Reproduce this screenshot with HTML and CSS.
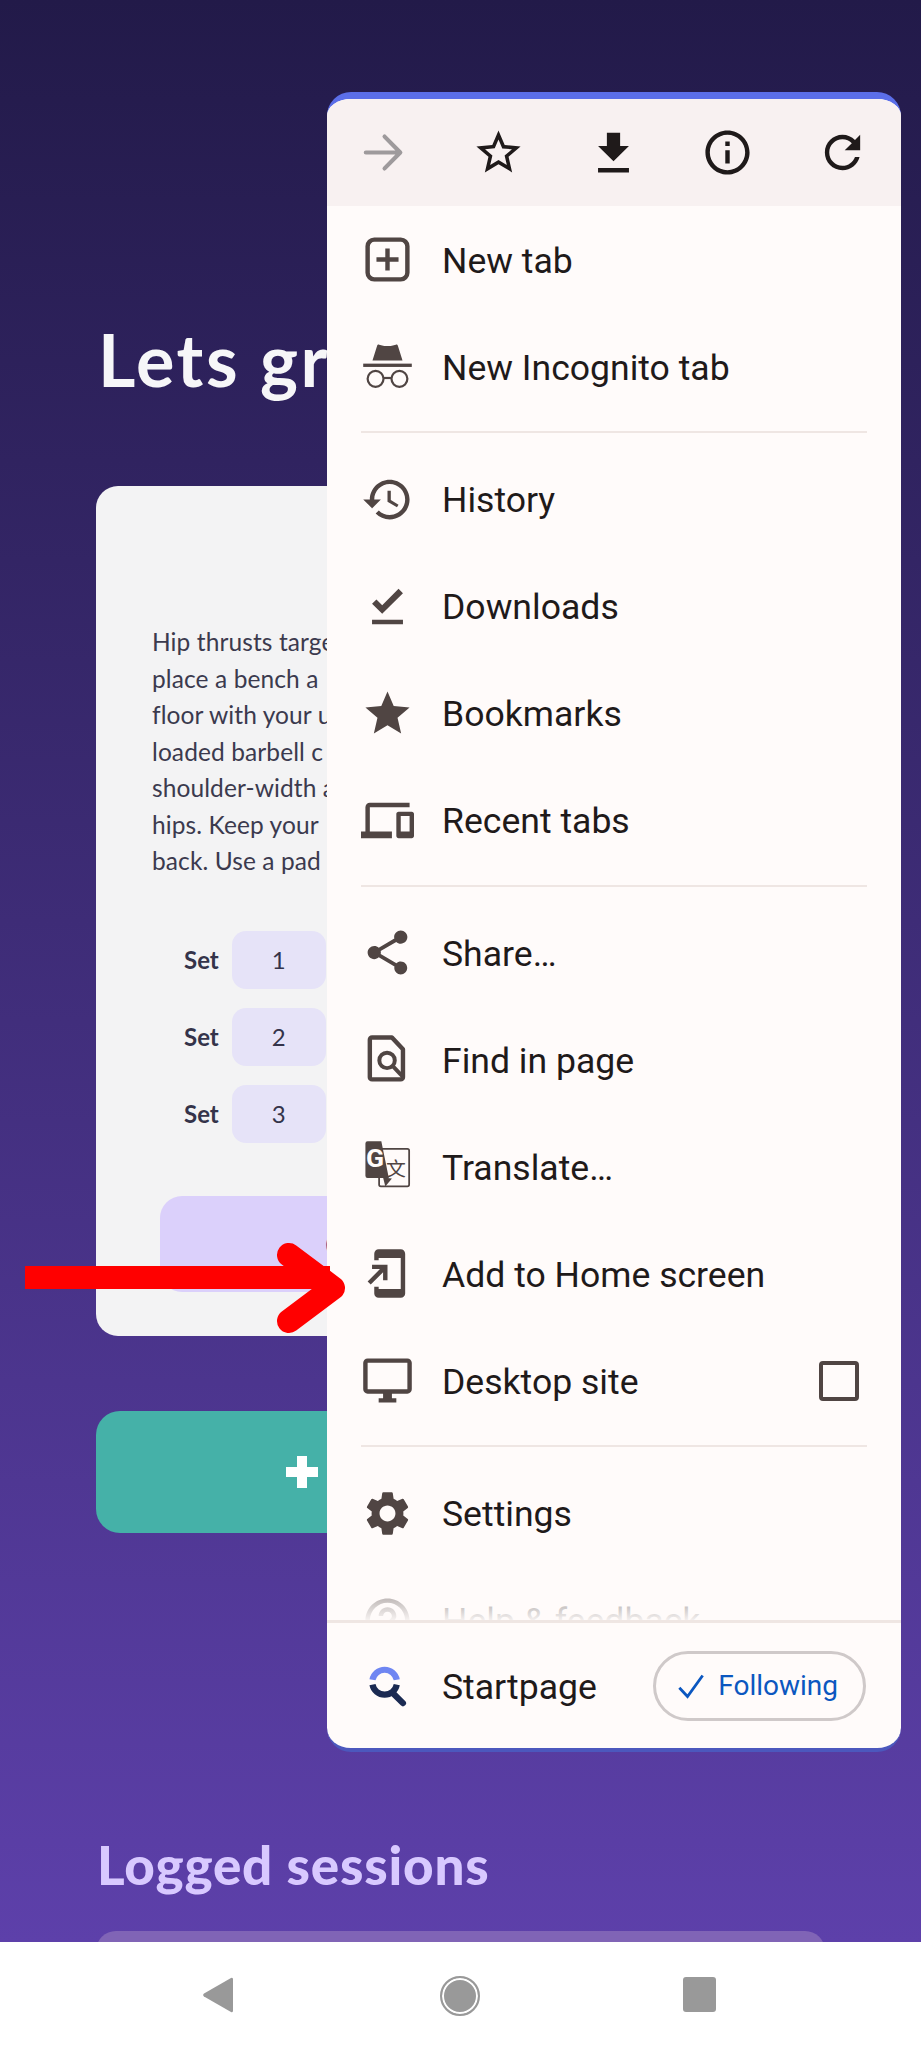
FILE: index.html
```html
<!doctype html>

<html lang="en">
  <head>
    <meta charset="utf-8">
    <title>Lets grow - browser menu</title>
    <link rel="stylesheet" href="styles.css">
  </head>

  <body>
    <main class="app">
      <h1>Lets grow</h1>

      <section class="card">
        <p class="desc">Hip thrusts targe<br>place a bench a<br>floor with your u<br>loaded barbell c<br>shoulder-width a<br>hips. Keep your<br>back. Use a pad</p>
        <div class="set"><span class="set-label">Set</span><span class="set-box">1</span></div>
        <div class="set"><span class="set-label">Set</span><span class="set-box">2</span></div>
        <div class="set"><span class="set-label">Set</span><span class="set-box">3</span></div>
        <button class="done">C</button>
      </section>

      <button class="add"><span class="plus"></span>Add exercise</button>

      <h2>Logged sessions</h2>
      <div class="session"></div>
    </main>

    <aside class="menu">
      <div class="toolbar">
        <svg class="ic ic-muted" viewBox="0 0 24 24"><path d="M4 12h15M12.5 4.8 19.6 12l-7.1 7.2" fill="none" stroke="currentColor" stroke-width="1.9" stroke-linecap="round" stroke-linejoin="round"/></svg>
        <svg class="ic" viewBox="0 0 24 24"><path d="M22 9.24l-7.19-.62L12 2 9.19 8.63 2 9.24l5.46 4.73L5.82 21 12 17.27 18.18 21l-1.63-7.03L22 9.24zM12 15.4l-3.76 2.27 1-4.28-3.32-2.88 4.38-.38L12 6.1l1.71 4.04 4.38.38-3.32 2.88 1 4.28L12 15.4z"/></svg>
        <svg class="ic" viewBox="0 0 24 24"><path d="M19 9h-4V3H9v6H5l7 7 7-7zM5 19v2h14v-2H5z"/></svg>
        <svg class="ic" viewBox="0 0 24 24"><path d="M11 7h2v2h-2zm0 4h2v6h-2zm1-9C6.48 2 2 6.48 2 12s4.48 10 10 10 10-4.48 10-10S17.52 2 12 2zm0 18c-4.41 0-8-3.59-8-8s3.59-8 8-8 8 3.59 8 8-3.59 8-8 8z"/></svg>
        <svg class="ic" viewBox="0 0 24 24"><path d="M17.65 6.35C16.2 4.9 14.21 4 12 4c-4.42 0-7.99 3.58-7.99 8s3.57 8 7.99 8c3.73 0 6.84-2.55 7.73-6h-2.08c-.82 2.33-3.04 4-5.65 4-3.31 0-6-2.69-6-6s2.69-6 6-6c1.66 0 3.14.69 4.22 1.78L13 11h7V4l-2.35 2.35z"/></svg>
      </div>

      <div class="items">
        <div class="item">
          <svg class="ic" viewBox="0 0 24 24"><rect x="3" y="3" width="18" height="18" rx="3" fill="none" stroke="currentColor" stroke-width="2"/><path d="M11 7h2v4h4v2h-4v4h-2v-4H7v-2h4z"/></svg>
          <span>New tab</span>
        </div>
        <div class="item">
          <svg class="ic" viewBox="0 0 24 24"><path d="M5.2 9.3 7.3 2.600c.1-.4.5-.6.9-.5l2.300.6h3l2.300-.6c.4-.1.8.1.9.5l2.100 6.700z"/><rect x="1" y="10.700" width="22" height="1.500"/><circle cx="6.600" cy="17.600" r="3.600" fill="none" stroke="currentColor" stroke-width="1"/><circle cx="17.400" cy="17.600" r="3.600" fill="none" stroke="currentColor" stroke-width="1"/><path d="M10 17.200h4" fill="none" stroke="currentColor" stroke-width="1"/></svg>
          <span>New Incognito tab</span>
        </div>
        <hr>
        <div class="item">
          <svg class="ic" viewBox="0 0 24 24"><path d="M13 3c-4.97 0-9 4.03-9 9H1l3.89 3.89.07.14L9 12H6c0-3.87 3.13-7 7-7s7 3.13 7 7-3.13 7-7 7c-1.93 0-3.68-.79-4.94-2.06l-1.42 1.42C8.27 19.99 10.51 21 13 21c4.97 0 9-4.03 9-9s-4.03-9-9-9zm-1 5v5l4.28 2.54.72-1.21-3.5-2.08V8H12z"/></svg>
          <span>History</span>
        </div>
        <div class="item">
          <svg class="ic" viewBox="0 0 24 24"><path d="M5 18h14v2H5v-2zm4.6-2.7L5 10.7l2-1.9 2.6 2.6L17 4l2 2-9.4 9.3z"/></svg>
          <span>Downloads</span>
        </div>
        <div class="item">
          <svg class="ic" viewBox="0 0 24 24"><path d="M12 17.27L18.18 21l-1.64-7.03L22 9.24l-7.19-.61L12 2 9.19 8.63 2 9.24l5.46 4.73L5.82 21z"/></svg>
          <span>Bookmarks</span>
        </div>
        <div class="item">
          <svg class="ic" viewBox="0 0 24 24"><path d="M4 6h18V4H4c-1.1 0-2 .9-2 2v11H0v3h14v-3H4V6zm19 2h-6c-.55 0-1 .45-1 1v10c0 .55.45 1 1 1h6c.55 0 1-.45 1-1V9c0-.55-.45-1-1-1zm-1 9h-4v-7h4v7z"/></svg>
          <span>Recent tabs</span>
        </div>
        <hr>
        <div class="item">
          <svg class="ic" viewBox="0 0 24 24"><path d="M18 16.08c-.76 0-1.44.3-1.96.77L8.91 12.7c.05-.23.09-.46.09-.7s-.04-.47-.09-.7l7.05-4.11c.54.5 1.25.81 2.04.81 1.66 0 3-1.34 3-3s-1.34-3-3-3-3 1.34-3 3c0 .24.04.47.09.7L8.04 9.81C7.5 9.31 6.79 9 6 9c-1.66 0-3 1.34-3 3s1.34 3 3 3c.79 0 1.5-.31 2.04-.81l7.12 4.16c-.05.21-.08.43-.08.65 0 1.61 1.31 2.92 2.92 2.92s2.92-1.31 2.92-2.92-1.31-2.92-2.92-2.92z"/></svg>
          <span>Share…</span>
        </div>
        <div class="item">
          <svg class="ic" viewBox="0 0 24 24"><path d="M5 2h9l5 5.400V20a1 1 0 0 1-1 1H5a1 1 0 0 1-1-1V3a1 1 0 0 1 1-1z" fill="none" stroke="currentColor" stroke-width="2" stroke-linejoin="round"/><circle cx="11.800" cy="12.400" r="3.500" fill="none" stroke="currentColor" stroke-width="1.800"/><path d="M14.400 15l4.400 4.600" fill="none" stroke="currentColor" stroke-width="1.800"/></svg>
          <span>Find in page</span>
        </div>
        <div class="item">
          <svg class="ic" viewBox="0 0 24 24"><rect x="8.200" y="4" width="13.600" height="17" rx=".8" fill="none" stroke="currentColor" stroke-width=".8"/><path d="M3 .6h6.200l3.400 16.600H3a1 1 0 0 1-1-1V1.600a1 1 0 0 1 1-1z"/><path d="M10 17l1 4 3-3.600z"/><text class="tr-g" x="6.400" y="12.400">G</text><text class="tr-zi" x="15.800" y="16.200">文</text></svg>
          <span>Translate…</span>
        </div>
        <div class="item">
          <svg class="ic" viewBox="0 0 24 24"><path d="M18 1.01L8 1c-1.1 0-2 .9-2 2v3h2V5h10v14H8v-1H6v3c0 1.1.9 2 2 2h10c1.1 0 2-.9 2-2V3c0-1.1-.9-1.99-2-1.99zM10 15h2V8H5v2h3.59L3 15.59 4.41 17 10 11.41V15z"/></svg>
          <span>Add to Home screen</span>
        </div>
        <div class="item">
          <svg class="ic" viewBox="0 0 24 24"><path d="M21 2H3c-1.1 0-2 .9-2 2v12c0 1.1.9 2 2 2h7v2H8v2h8v-2h-2v-2h7c1.1 0 2-.9 2-2V4c0-1.1-.9-2-2-2zm0 14H3V4h18v12z"/></svg>
          <span>Desktop site</span>
          <span class="check"></span>
        </div>
        <hr>
        <div class="item">
          <svg class="ic" viewBox="0 0 24 24"><path d="M19.14 12.94c.04-.3.06-.61.06-.94 0-.32-.02-.64-.07-.94l2.03-1.58c.18-.14.23-.41.12-.61l-1.92-3.32c-.12-.22-.37-.29-.59-.22l-2.39.96c-.5-.38-1.03-.7-1.62-.94l-.36-2.54c-.04-.24-.24-.41-.48-.41h-3.84c-.24 0-.43.17-.47.41l-.36 2.54c-.59.24-1.13.57-1.62.94l-2.39-.96c-.22-.08-.47 0-.59.22L2.74 8.87c-.12.21-.08.47.12.61l2.03 1.58c-.05.3-.09.63-.09.94s.02.64.07.94l-2.03 1.58c-.18.14-.23.41-.12.61l1.92 3.32c.12.22.37.29.59.22l2.39-.96c.5.38 1.03.7 1.62.94l.36 2.54c.05.24.24.41.48.41h3.84c.24 0 .44-.17.47-.41l.36-2.54c.59-.24 1.13-.56 1.62-.94l2.39.96c.22.08.47 0 .59-.22l1.92-3.32c.12-.22.07-.47-.12-.61l-2.01-1.58zM12 15.6c-1.98 0-3.6-1.62-3.6-3.6s1.62-3.6 3.6-3.6 3.6 1.62 3.6 3.6-1.62 3.6-3.6 3.6z"/></svg>
          <span>Settings</span>
        </div>
        <div class="item">
          <svg class="ic" viewBox="0 0 24 24"><path d="M11 18h2v-2h-2v2zm1-16C6.48 2 2 6.48 2 12s4.48 10 10 10 10-4.48 10-10S17.52 2 12 2zm0 18c-4.41 0-8-3.59-8-8s3.59-8 8-8 8 3.59 8 8-3.59 8-8 8zm0-14c-2.21 0-4 1.79-4 4h2c0-1.1.9-2 2-2s2 .9 2 2c0 2-3 1.75-3 5h2c0-2.25 3-2.5 3-5 0-2.21-1.79-4-4-4z"/></svg>
          <span>Help &amp; feedback</span>
        </div>
        <div class="fade"></div>
      </div>

      <div class="footer">
        <svg class="ic" viewBox="0 0 24 24"><path d="M5.200 9.400a5.600 5.600 0 0 1 11 0" fill="none" stroke="#6f86f2" stroke-width="2.800"/><path d="M5.200 11.600a5.600 5.600 0 0 0 11 0" fill="none" stroke="#1b2a52" stroke-width="2.800"/><path d="M14.600 15.600l4.400 4.400" fill="none" stroke="#1b2a52" stroke-width="2.800" stroke-linecap="round"/></svg>
        <span class="foot-label">Startpage</span>
        <span class="follow">
          <svg class="tick" viewBox="0 0 24 24"><path d="M2 13.500 9 21 22 3" fill="none" stroke="currentColor" stroke-width="2.400"/></svg>
          Following
        </span>
      </div>
    </aside>

    <svg class="arrow" viewBox="0 0 360 80">
      <rect x="25" y="11" width="305" height="23"/>
      <path d="M289 0 333 33 289 66" fill="none" stroke="#ff0000" stroke-width="24" stroke-linecap="round" stroke-linejoin="round"/>
    </svg>

    <nav class="navbar">
      <svg class="nav-back" viewBox="0 0 30 36"><path d="M28 1a1.500 1.500 0 0 1 2 1v32a1.500 1.500 0 0 1-2 1L1 19.500a2 2 0 0 1 0-3z"/></svg>
      <span class="nav-home"></span>
      <span class="nav-recent"></span>
    </nav>
  </body>
</html>
```

FILE: styles.css
```css
:root {
  --ink: #1f1a1a;
  --icon: #504543;
  --menu: #fffbfa;
  --line: #efe6e3;
}

* {
  box-sizing: border-box;
}

html, body {
  margin: 0;
  height: 2048px;
  overflow: hidden;
}

body {
  position: relative;
  font-family: "Lato", "Liberation Sans", sans-serif;
  background: #fff;
}

/* page behind the menu */
.app {
  height: 1942px;
  padding: 0 96px;
  overflow: hidden;
  background: linear-gradient(180deg, #221a49 0%, #5d40aa 100%);
}

h1 {
  margin: 316px 0 0 2px;
  height: 170px;
  font-size: 72px;
  line-height: 86px;
  font-weight: 700;
  letter-spacing: 2.500px;
  color: #f6f6f8;
  white-space: nowrap;
}

.card {
  height: 850px;
  padding: 138px 56px 0;
  border-radius: 22px;
  background: #f3f3f4;
}

.desc {
  margin: 0 0 51px;
  font-size: 24.500px;
  line-height: 36.500px;
  letter-spacing: .1px;
  color: #3b3a4e;
  white-space: nowrap;
}

.set {
  display: flex;
  align-items: center;
  gap: 13px;
  margin: 0 0 19px 32px;
}

.set-label {
  font-size: 24px;
  font-weight: 700;
  color: #34334a;
}

.set-box {
  width: 94px;
  height: 58px;
  border-radius: 14px;
  background: #e6e3f8;
  text-align: center;
  font-size: 24px;
  line-height: 58px;
  color: #34334a;
}

.done {
  display: block;
  width: 601px;
  height: 96px;
  margin: 53px 0 0 8px;
  padding: 0 0 0 165px;
  border: 0;
  border-radius: 22px;
  background: #dbd0fb;
  font-family: inherit;
  font-size: 36px;
  font-weight: 700;
  color: #3b2a80;
  text-align: left;
}

.add {
  display: flex;
  align-items: center;
  gap: 14px;
  width: 100%;
  height: 122px;
  margin-top: 75px;
  padding: 0 0 0 190px;
  border: 0;
  border-radius: 24px;
  background: #45b1a8;
  font-family: inherit;
  font-size: 40px;
  font-weight: 700;
  color: #fff;
}

/* plus is a cross of two bars */
.plus {
  width: 32px;
  height: 32px;
  background:
    linear-gradient(#fff, #fff) center / 100% 10px no-repeat,
    linear-gradient(#fff, #fff) center / 10px 100% no-repeat;
}

h2 {
  margin: 302px 0 0 1px;
  height: 60px;
  font-size: 53px;
  line-height: 60px;
  font-weight: 900;
  letter-spacing: .8px;
  color: #d8c9ff;
  white-space: nowrap;
}

.session {
  height: 120px;
  margin-top: 36px;
  border-radius: 20px;
  background: #8064b6;
}

/* chrome overflow menu */
.menu {
  position: absolute;
  top: 92px;
  left: 327px;
  width: 574px;
  height: 1660px;
  display: flex;
  flex-direction: column;
  overflow: hidden;
  border-top: 7px solid #5b6ee8;
  border-bottom: 4px solid #4c58bd;
  border-radius: 24px;
  background: var(--menu);
  font-family: "Roboto", sans-serif;
  color: var(--ink);
}

.ic {
  flex: none;
  width: 53px;
  height: 53px;
  fill: currentColor;
}

.toolbar {
  flex: none;
  display: flex;
  align-items: center;
  justify-content: space-between;
  height: 107px;
  padding: 0 32px 0 30px;
  background: #f8f1f1;
}

.ic-muted {
  color: #9e9a9c;
}

.items {
  position: relative;
  flex: 1;
  overflow: hidden;
}

.item {
  display: flex;
  align-items: center;
  gap: 28px;
  height: 107px;
  padding: 0 34px;
  font-size: 35.600px;
  white-space: nowrap;
}

.item .ic,
.footer > .ic {
  color: var(--icon);
}

.item svg + span {
  flex: 1;
  padding-top: 2px;
}

hr {
  height: 2px;
  margin: 11px 34px 12.500px;
  border: 0;
  background: var(--line);
}

.tr-g {
  font-family: "Roboto", sans-serif;
  font-size: 12px;
  font-weight: 700;
  fill: var(--menu);
  text-anchor: middle;
}

.tr-zi {
  font-family: "Noto Sans CJK SC", sans-serif;
  font-size: 9px;
  fill: var(--icon);
  text-anchor: middle;
}

.check {
  flex: none;
  width: 40px;
  height: 40px;
  margin: 0 8px 0 0;
  border: 4px solid var(--icon);
  border-radius: 4px;
}

/* Help row melts away under the footer */
.fade {
  position: absolute;
  left: 0;
  right: 0;
  bottom: 0;
  height: 46px;
  background: linear-gradient(rgba(255, 251, 250, 0.3), rgba(255, 251, 250, 0.95));
}

.footer {
  flex: none;
  display: flex;
  align-items: center;
  gap: 28px;
  height: 128px;
  padding: 0 35px 0 34px;
  border-top: 3px solid var(--line);
  font-size: 35.600px;
  white-space: nowrap;
}

.foot-label {
  padding-top: 2px;
}

.follow {
  display: flex;
  align-items: center;
  gap: 13px;
  height: 70px;
  margin-left: auto;
  padding: 0 25px 0 21px;
  border: 3px solid #cfc9c9;
  border-radius: 35px;
  font-size: 28px;
  font-weight: 400;
  color: #0b57c0;
}

.tick {
  width: 28px;
  height: 28px;
}

.arrow {
  position: absolute;
  top: 1255px;
  left: 0;
  width: 360px;
  height: 80px;
  fill: #ff0000;
  overflow: visible;
}

/* android nav bar */
.navbar {
  display: flex;
  height: 106px;
  padding-top: 35px;
  background: #fff;
}

.nav-back {
  width: 30px;
  height: 36px;
  margin-left: 203px;
  fill: #999;
}

.nav-home {
  width: 40px;
  height: 40px;
  margin: -1px 0 0 207px;
  border: 2px solid #999;
  border-radius: 50%;
  background: #999;
  box-shadow: inset 0 0 0 2px #fff;
}

.nav-recent {
  width: 33px;
  height: 35px;
  margin-left: 203px;
  border-radius: 3px;
  background: #999;
}
```
